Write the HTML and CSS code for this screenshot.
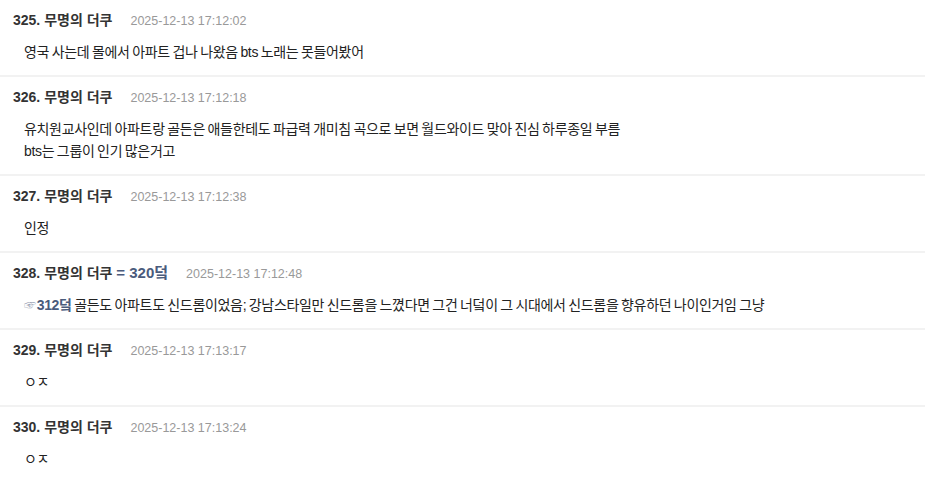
FILE: index.html
```html
<!DOCTYPE html>
<html lang="ko">
<head>
<meta charset="utf-8">
<link rel="stylesheet" href="styles.css">
</head>
<body>
<div class="list">
  <div class="item">
    <div class="head"><span class="name">325. 무명의 더쿠</span><span class="date">2025-12-13 17:12:02</span></div>
    <div class="body">영국 사는데 몰에서 아파트 겁나 나왔음 bts 노래는 못들어봤어</div>
  </div>
  <div class="item">
    <div class="head"><span class="name">326. 무명의 더쿠</span><span class="date">2025-12-13 17:12:18</span></div>
    <div class="body">유치원교사인데 아파트랑 골든은 애들한테도 파급력 개미침 곡으로 보면 월드와이드 맞아 진심 하루종일 부름<br>bts는 그룹이 인기 많은거고</div>
  </div>
  <div class="item">
    <div class="head"><span class="name">327. 무명의 더쿠</span><span class="date">2025-12-13 17:12:38</span></div>
    <div class="body">인정</div>
  </div>
  <div class="item">
    <div class="head"><span class="name">328. 무명의 더쿠 <span class="ref head-ref">= 320덬</span></span><span class="date">2025-12-13 17:12:48</span></div>
    <div class="body"><span class="hand">☞</span><span class="ref">312덬</span> 골든도 아파트도 신드롬이었음; 강남스타일만 신드롬을 느꼈다면 그건 너덬이 그 시대에서 신드롬을 향유하던 나이인거임 그냥</div>
  </div>
  <div class="item">
    <div class="head"><span class="name">329. 무명의 더쿠</span><span class="date">2025-12-13 17:13:17</span></div>
    <div class="body">ㅇㅈ</div>
  </div>
  <div class="item">
    <div class="head"><span class="name">330. 무명의 더쿠</span><span class="date">2025-12-13 17:13:24</span></div>
    <div class="body">ㅇㅈ</div>
  </div>
</div>
</body>
</html>
```
FILE: styles.css
```css
html, body {
  margin: 0;
  padding: 0;
  background: #fff;
}
body {
  font-family: "Liberation Sans", "Noto Sans CJK KR", sans-serif;
  color: #333;
  width: 925px;
  overflow: hidden;
}
.list {
  display: flex;
  flex-direction: column;
  margin-top: -2px;
}
.item {
  border-top: 2px solid #f2f2f2;
  padding: 10px 0 12px 13px;
  display: flex;
  flex-direction: column;
  gap: 11px;
}
.head {
  display: flex;
  align-items: baseline;
  gap: 18px;
  height: 20px;
  line-height: 20px;
}
.name {
  font-size: 14px;
  font-weight: bold;
  color: #333;
}
.head-ref {
  font-size: 15px;
  line-height: 1;
}
.date {
  font-size: 12.5px;
  color: #999;
}
.body {
  font-size: 14px;
  line-height: 22px;
  height: auto;
  padding-left: 11px;
  color: #222;
  letter-spacing: -0.32px;
  word-spacing: -1px;
}
.body span {
  line-height: 1;
}
.ref {
  color: #4a5b7c;
  font-weight: bold;
}
.hand {
  color: #9aa3b5;
  font-size: 12px;
  margin-right: 1px;
}
```
